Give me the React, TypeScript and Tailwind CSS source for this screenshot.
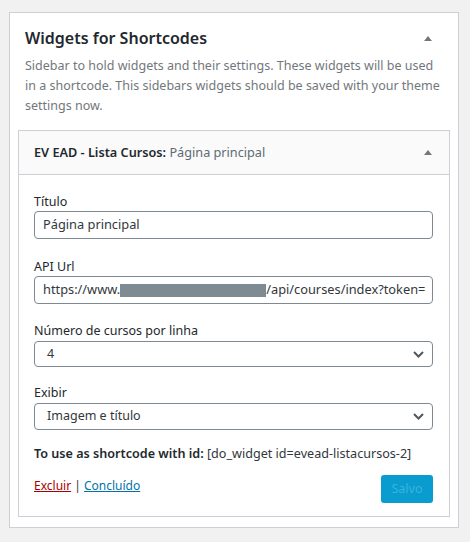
import React from "react";

const font = { fontFamily: '"Noto Sans", "Liberation Sans", sans-serif' };

function Caret() {
  return (
    <svg width="8" height="5" viewBox="0 0 8 5" className="block">
      <path d="M0 5 L4 0 L8 5 Z" fill="#72777c" />
    </svg>
  );
}

function Chevron() {
  return (
    <svg width="11" height="7" viewBox="0 0 11 7" className="block">
      <path d="M1 1 L5.5 5.5 L10 1" fill="none" stroke="#50575e" strokeWidth="2" />
    </svg>
  );
}

function Field({ label, mt, children }: { label: string; mt: string; children: React.ReactNode }) {
  return (
    <div className={mt}>
      <div className="text-[12.5px] leading-[18px] text-[#23282d]">{label}</div>
      {children}
    </div>
  );
}

function Select({ value, h }: { value: string; h: string }) {
  return (
    <div
      className={`mt-[1px] flex ${h} w-[399px] items-center justify-between rounded-[4px] border border-[#7e8993] bg-white pl-[12px] pr-[8px] text-[12.5px] text-[#32373c]`}
    >
      <span>{value}</span>
      <Chevron />
    </div>
  );
}

export default function App() {
  return (
    <div className="min-h-[542px] bg-[#f1f1f1] pl-[9px] pt-[12px]" style={font}>
      <div className="w-[450px] border border-[#ccd0d4] bg-white px-[15px] pb-[10px] pt-[13px]">
        <div className="flex items-center justify-between">
          <h2 className="text-[16px] font-semibold leading-[24px] text-[#23282d]">Widgets for Shortcodes</h2>
          <div className="mr-[11px]">
            <Caret />
          </div>
        </div>
        <p className="mt-[6px] text-[12.5px] leading-[20px] text-[#72777c]">
          Sidebar to hold widgets and their settings. These widgets will be used in a shortcode. This sidebars
          widgets should be saved with your theme settings now.
        </p>

        <div className="-mx-[7px] mt-[14px] border border-[#ccd0d4] bg-white">
          <div className="flex h-[44px] items-center justify-between border-b border-[#ccd0d4] bg-[#fafafa] pl-[15px] pr-[17px]">
            <span className="text-[12.7px] font-semibold text-[#23282d]">
              EV EAD - Lista Cursos: <span className="font-normal text-[#606a73]">Página principal</span>
            </span>
            <Caret />
          </div>

          <div className="px-[15px] pb-[13px] pt-[18px]">
            <Field label="Título" mt="">
              <div className="flex h-[28px] w-[399px] items-center rounded-[4px] border border-[#7e8993] bg-white pl-[8px] text-[12.8px] text-[#32373c]">
                Página principal
              </div>
            </Field>

            <Field label="API Url" mt="mt-[19px]">
              <div className="flex h-[28px] w-[399px] items-center overflow-hidden whitespace-nowrap rounded-[4px] border border-[#7e8993] bg-white pl-[8px] text-[12.8px] text-[#32373c]">
                <span>https://www.</span>
                <span className="inline-block h-[13px] w-[146px] bg-[#7f8b93]" />
                <span>/api/courses/index?token=</span>
              </div>
            </Field>

            <Field label="Número de cursos por linha" mt="mt-[18px]">
              <Select value="4" h="h-[26px]" />
            </Field>

            <Field label="Exibir" mt="mt-[17px]">
              <Select value="Imagem e título" h="h-[27px]" />
            </Field>

            <p className="mt-[14px] text-[12.6px] leading-[20px] text-[#32373c]">
              <span className="font-semibold text-[#23282d]">To use as shortcode with id:</span>{" "}
              [do_widget id=evead-listacursos-2]
            </p>

            <div className="mt-[11px] flex w-[399px] items-start justify-between">
              <div className="pt-[1px] text-[12px] leading-[20px] text-[#32373c]">
                <a className="text-[#a00] underline">Excluir</a> | <a className="text-[#0073aa] underline">Concluído</a>
              </div>
              <button className="h-[28px] w-[52px] rounded-[3px] bg-[#0a9bcf] text-[12.5px] text-[#36b5de]">
                Salvo
              </button>
            </div>
          </div>
        </div>
      </div>
    </div>
  );
}
